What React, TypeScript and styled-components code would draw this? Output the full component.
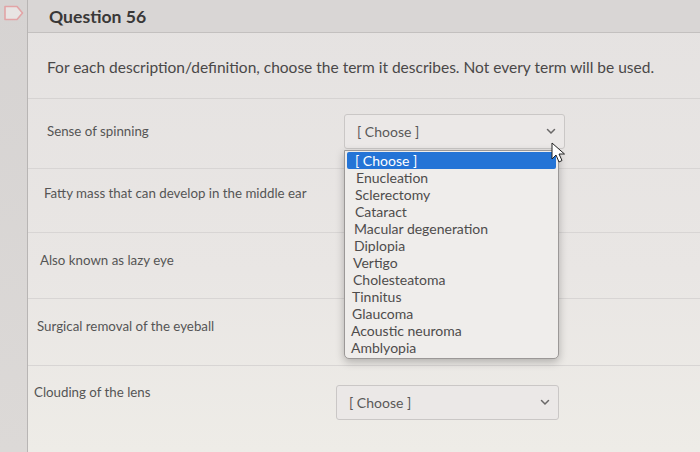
import React from "react";
import styled, { createGlobalStyle } from "styled-components";

const GlobalStyle = createGlobalStyle`
  html, body { margin: 0; padding: 0; }
  body {
    width: 700px;
    height: 452px;
    overflow: hidden;
    background: #e3e0df;
    font-family: Lato, "Open Sans", "Liberation Sans", sans-serif;
    color: #4a4848;
  }
`;

const Page = styled.div`
  display: flex;
  width: 700px;
  height: 452px;
`;

const Sidebar = styled.div`
  width: 27px;
  flex: none;
  background: linear-gradient(180deg, #d6d3d2 0%, #dcd9d7 100%);
  border-right: 1px solid #b8b5b4;
  padding-top: 5px;
  display: flex;
  justify-content: center;
  align-items: flex-start;
`;

const Card = styled.div`
  flex: 1;
  display: flex;
  flex-direction: column;
  background: linear-gradient(180deg, #e5e2e1 0%, #e9e6e4 60%, #eeece7 100%);
`;

const Header = styled.div`
  height: 32px;
  flex: none;
  display: flex;
  align-items: center;
  padding-left: 21px;
  background: #d9d6d5;
  border-bottom: 1px solid #c3c0bf;
`;

const Title = styled.h2`
  margin: 0;
  font-size: 17.6px;
  font-weight: 700;
  color: #3a3838;
`;

const Intro = styled.p`
  margin: 0;
  height: 63px;
  display: flex;
  align-items: center;
  padding-left: 19px;
  padding-top: 2px;
  font-size: 15.5px;
  color: #4a4848;
  border-bottom: 1px solid #d6d3d2;
`;

const Row = styled.div<{ $indent: number; $height: number }>`
  height: ${(p) => p.$height}px;
  flex: none;
  box-sizing: border-box;
  display: flex;
  align-items: flex-start;
  padding-left: ${(p) => p.$indent}px;
  border-bottom: 1px solid #d8d5d4;
  &:last-child { border-bottom: none; }
`;

const Label = styled.div<{ $top: number; $width: number }>`
  width: ${(p) => p.$width}px;
  flex: none;
  padding-top: ${(p) => p.$top}px;
  font-size: 13.3px;
  line-height: 16px;
  color: #555;
`;

const SelectWrap = styled.div<{ $top: number; $width: number }>`
  position: relative;
  margin-top: ${(p) => p.$top}px;
  width: ${(p) => p.$width}px;
`;

const SelectBox = styled.div`
  height: 35px;
  box-sizing: border-box;
  display: flex;
  align-items: center;
  justify-content: space-between;
  padding: 0 8px 0 12px;
  background: #ebe8e7;
  border: 1px solid #cac7c6;
  border-radius: 3px;
  font-size: 14px;
  color: #5a5858;
`;

const ListBox = styled.ul`
  position: absolute;
  top: 36px;
  left: 0;
  width: 215px;
  margin: 0;
  padding: 1px 2px 2px;
  list-style: none;
  box-sizing: border-box;
  background: #efedeb;
  border: 1px solid #9b9897;
  border-radius: 0 0 5px 5px;
  box-shadow: 0 3px 8px rgba(0, 0, 0, 0.25);
  z-index: 5;
`;

const Option = styled.li<{ $active?: boolean; $shift: number }>`
  height: 17px;
  line-height: 17px;
  font-size: 14px;
  padding-left: ${(p) => p.$shift}px;
  color: ${(p) => (p.$active ? "#ffffff" : "#4e4c4c")};
  background: ${(p) => (p.$active ? "#2474d6" : "transparent")};
  border-radius: ${(p) => (p.$active ? "2px" : "0")};
`;

const Cursor = styled.svg`
  position: absolute;
  top: 28px;
  left: 207px;
  z-index: 6;
`;

const Chevron = () => (
  <svg width="10" height="7" viewBox="0 0 10 7">
    <path d="M1.5 1.5 L5 5 L8.5 1.5" fill="none" stroke="#6a6868" strokeWidth="1.5" strokeLinecap="round" />
  </svg>
);

const Flag = () => (
  <svg width="21" height="16" viewBox="0 0 21 16">
    <path d="M2 1.5 H14 L19.5 8 L14 14.5 H2 Z" fill="#e8e4e3" stroke="#e2a4a6" strokeWidth="1.6" strokeLinejoin="round" />
  </svg>
);

const options = [
  "[ Choose ]",
  "Enucleation",
  "Sclerectomy",
  "Cataract",
  "Macular degeneration",
  "Diplopia",
  "Vertigo",
  "Cholesteatoma",
  "Tinnitus",
  "Glaucoma",
  "Acoustic neuroma",
  "Amblyopia",
];

type RowData = {
  label: string;
  indent: number;
  height: number;
  labelTop: number;
  labelWidth: number;
  selectTop: number;
  selectWidth: number;
  covered?: boolean;
  open?: boolean;
};

const rows: RowData[] = [
  { label: "Sense of spinning", indent: 19, height: 70, labelTop: 24, labelWidth: 297, selectTop: 15, selectWidth: 221, open: true },
  { label: "Fatty mass that can develop in the middle ear", indent: 16, height: 64, labelTop: 16, labelWidth: 298, selectTop: 15, selectWidth: 221, covered: true },
  { label: "Also known as lazy eye", indent: 12, height: 66, labelTop: 19, labelWidth: 300, selectTop: 15, selectWidth: 221, covered: true },
  { label: "Surgical removal of the eyeball", indent: 9, height: 67, labelTop: 19, labelWidth: 301, selectTop: 15, selectWidth: 221, covered: true },
  { label: "Clouding of the lens", indent: 6, height: 86, labelTop: 18, labelWidth: 302, selectTop: 19, selectWidth: 223 },
];

export default function App() {
  return (
    <>
      <GlobalStyle />
      <Page>
        <Sidebar>
          <Flag />
        </Sidebar>
        <Card>
          <Header>
            <Title>Question 56</Title>
          </Header>
          <Intro>For each description/definition, choose the term it describes. Not every term will be used.</Intro>
          {rows.map((r) => (
            <Row key={r.label} $indent={r.indent} $height={r.height}>
              <Label $top={r.labelTop} $width={r.labelWidth}>{r.label}</Label>
              {!r.covered && (
                <SelectWrap $top={r.selectTop} $width={r.selectWidth}>
                  <SelectBox>
                    <span>[ Choose ]</span>
                    <Chevron />
                  </SelectBox>
                  {r.open && (
                    <>
                      <ListBox>
                        {options.map((o, j) => (
                          <Option key={o} $active={j === 0} $shift={j === 0 ? 8 : 9 - Math.round(j * 0.45)}>
                            {o}
                          </Option>
                        ))}
                      </ListBox>
                      <Cursor width="16" height="22" viewBox="0 0 16 22">
                        <path d="M1 1 L1 17 L5 13 L8 20 L11 18.5 L8 12 L13.5 12 Z" fill="#ffffff" stroke="#222" strokeWidth="1" strokeLinejoin="round" />
                      </Cursor>
                    </>
                  )}
                </SelectWrap>
              )}
            </Row>
          ))}
        </Card>
      </Page>
    </>
  );
}
